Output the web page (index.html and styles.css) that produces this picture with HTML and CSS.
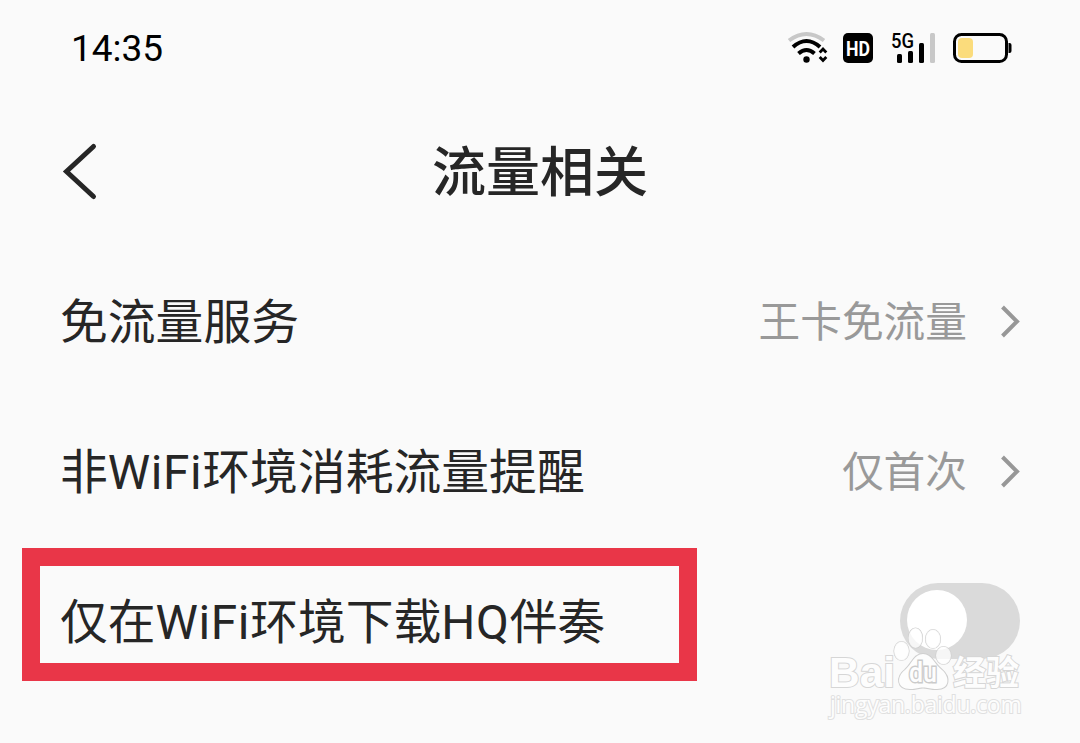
FILE: index.html
```html
<!DOCTYPE html>
<html lang="zh-CN">
<head>
    <meta charset="UTF-8">
    <meta name="viewport" content="width=device-width, initial-scale=1.0">
    <title>流量相关</title>
    <link rel="stylesheet" href="styles.css">
</head>
<body>
    <div class="status-bar">
        <span class="time">14:35</span>
        <svg class="status-icons" width="230" height="40" viewBox="0 0 230 40">
            <!-- wifi -->
            <g fill="none" stroke-width="4">
                <path d="M4 12.500 Q21.500 -0.500 39 12.500" stroke="#c8c8c8"/>
                <path d="M8 19 Q21.500 7 35 19" stroke="#000"/>
                <path d="M13.500 25.500 Q21.500 18.500 29.500 25.500" stroke="#000"/>
            </g>
            <circle cx="21.500" cy="31.500" r="3.200"/>
            <path d="M34.700 24.500 L38 21 L41.300 24.500 M34.700 29 L38 32.500 L41.300 29" fill="none" stroke="#000" stroke-width="2.800"/>
            <!-- hd -->
            <rect x="58" y="5" width="30" height="30" rx="5"/>
            <text class="hd-text" x="73" y="27.500" textLength="24" lengthAdjust="spacingAndGlyphs">HD</text>
            <!-- signal -->
            <text class="net-text" x="106" y="20" textLength="23" lengthAdjust="spacingAndGlyphs">5G</text>
            <rect x="112" y="26" width="5" height="9" rx="1.500"/>
            <rect x="123" y="23" width="5" height="12" rx="1.500"/>
            <rect x="134" y="15" width="5" height="20" rx="1.500"/>
            <rect x="145" y="5" width="5" height="30" rx="1.500" fill="#c8c8c8"/>
            <!-- battery -->
            <rect x="169.500" y="6.500" width="52" height="27" rx="7" fill="none" stroke="#000" stroke-width="3"/>
            <rect x="173" y="10" width="15" height="20" rx="4" fill="#fbdc7c"/>
            <path d="M223.500 15 h1 q2 0 2 2 v6 q0 2 -2 2 h-1z"/>
        </svg>
    </div>

    <header class="title-bar">
        <svg class="back" width="40" height="60" viewBox="0 0 40 60">
            <path d="M33.500 5.500 L6.500 30.500 L33.500 55.500" fill="none" stroke="#262626" stroke-width="5" stroke-linecap="round"/>
        </svg>
        <h1>流量相关</h1>
    </header>

    <div class="settings">
        <div class="row">
            <span class="label">免流量服务</span>
            <span class="value">王卡免流量</span>
            <svg class="arrow" width="24" height="36" viewBox="0 0 24 36">
                <path d="M3.500 4 L18 18.500 L3.500 33" fill="none" stroke="#979797" stroke-width="4"/>
            </svg>
        </div>
        <div class="row">
            <span class="label">非<span class="latin">WiFi</span>环境消耗流量提醒</span>
            <span class="value">仅首次</span>
            <svg class="arrow" width="24" height="36" viewBox="0 0 24 36">
                <path d="M3.500 4 L18 18.500 L3.500 33" fill="none" stroke="#979797" stroke-width="4"/>
            </svg>
        </div>
        <div class="row highlight">
            <span class="label">仅在<span class="latin">WiFi</span>环境下载<span class="latin">HQ</span>伴奏</span>
            <span class="toggle"><span class="knob"></span></span>
        </div>
    </div>

    <div class="watermark">
        <svg class="mark" width="210" height="74" viewBox="0 0 210 74">
            <text class="wm-bai" x="7" y="68" textLength="66" lengthAdjust="spacingAndGlyphs">Bai</text>
            <ellipse cx="79.500" cy="32" rx="7.500" ry="9.500"/>
            <ellipse cx="93.500" cy="19" rx="7" ry="10"/>
            <ellipse cx="111" cy="20" rx="7.500" ry="9.500"/>
            <ellipse cx="121.500" cy="36.500" rx="7.500" ry="9"/>
            <path class="pad" d="M101 35 C92 35 90 45 83 51 C74 58 75 70 88 70 C95 70 96 68.500 101 68.500 C106 68.500 108 70 115 70 C128 70 128 58 120 51 C112 45 110 35 101 35z"/>
            <text class="wm-du" x="87" y="63" textLength="28" lengthAdjust="spacingAndGlyphs">du</text>
            <text class="wm-cn" x="131" y="66" textLength="66" lengthAdjust="spacingAndGlyphs">经验</text>
        </svg>
        <div class="wm-url">jingyan.baidu.com</div>
    </div>
</body>
</html>
```

FILE: styles.css
```css
* {
    box-sizing: border-box;
}

body {
    margin: 0;
    width: 1080px;
    height: 743px;
    overflow: hidden;
    position: relative;
    background-color: #fafafa;
    color: #262626;
    font-family: Roboto, "Noto Sans CJK SC", sans-serif;
}

.status-bar {
    display: flex;
    align-items: center;
    justify-content: space-between;
    height: 96px;
    padding: 0 65px 0 71px;
    color: #000;
}

.time {
    font-size: 37px;
    line-height: 40px;
    padding-top: 2px;
}

.hd-text {
    font-size: 21px;
    font-weight: bold;
    text-anchor: middle;
    fill: #fff;
}

.net-text {
    font-size: 20px;
    font-weight: 500;
}

.title-bar {
    display: grid;
    grid-template-columns: 40px 1fr 40px;
    align-items: center;
    height: 150px;
    padding: 0 60px;
}

.title-bar h1 {
    margin: 0;
    padding-top: 6px;
    font-size: 54px;
    font-weight: 500;
    line-height: 80px;
    text-align: center;
}

.row {
    display: flex;
    align-items: center;
    height: 150px;
    padding: 0 57px 0 60px;
}

.label {
    flex: 1;
    padding-top: 3px;
    font-size: 47.800px;
    line-height: 70px;
    white-space: nowrap;
}

.latin {
    letter-spacing: 0.600px;
}

.value {
    padding-top: 3px;
    font-size: 41.700px;
    line-height: 62px;
    color: #999;
}

.arrow {
    margin-left: 32px;
}

.highlight {
    position: relative;
    padding-right: 60px;
}

.highlight::before {
    content: "";
    box-sizing: border-box;
    position: absolute;
    left: 22px;
    top: 2px;
    width: 675px;
    height: 133px;
    border: 18px solid #e93648;
}

.toggle {
    width: 120px;
    height: 76px;
    padding: 7px;
    border-radius: 38px;
    background-color: #dadada;
}

.knob {
    display: block;
    width: 60px;
    height: 60px;
    border-radius: 50%;
    background-color: #fff;
}

.watermark {
    position: absolute;
    left: 822px;
    top: 619px;
}

.mark {
    display: block;
    overflow: visible;
    fill: #fdfdfd;
    stroke: #d6d6d6;
    stroke-width: 2px;
    paint-order: stroke;
}

.mark ellipse {
    fill: rgba(255, 255, 255, 0.75);
    stroke: #cfcfcf;
    stroke-width: 1.200px;
}

.mark .pad {
    stroke: #cfcfcf;
}

.wm-bai {
    font-family: "Liberation Sans", sans-serif;
    font-size: 43px;
    font-weight: bold;
}

.wm-du {
    font-size: 28px;
    font-weight: 500;
    stroke: #cbcbcb;
    stroke-width: 3px;
}

.wm-cn {
    font-size: 34px;
    font-weight: bold;
}

.wm-url {
    margin-top: -5px;
    padding-left: 8px;
    font-family: "Open Sans", sans-serif;
    font-size: 23px;
    line-height: 32px;
    letter-spacing: -0.250px;
    color: #fdfdfd;
    -webkit-text-stroke: 2px #e0e0e0;
    paint-order: stroke fill;
}
```
